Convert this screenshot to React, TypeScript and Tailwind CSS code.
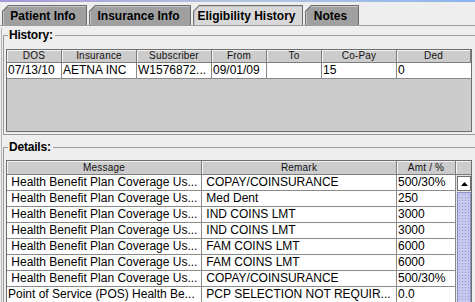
import React from "react";

const histHeaders = ["DOS", "Insurance", "Subscriber", "From", "To", "Co-Pay", "Ded"];
const histRow = ["07/13/10", "AETNA INC", "W1576872...", "09/01/09", "", "15", "0"];
const histWidths = ["w-[55px]", "w-[75px]", "w-[75px]", "w-[55px]", "w-[55px]", "w-[75px]", "w-[74px]"];

const detHeaders = ["Message", "Remark", "Amt / %"];
const detWidths = ["w-[195px]", "w-[195px]", "w-[59px]"];
const detRows: string[][] = [
  [" Health Benefit Plan Coverage Us...", " COPAY/COINSURANCE", "500/30%"],
  [" Health Benefit Plan Coverage Us...", " Med Dent", "250"],
  [" Health Benefit Plan Coverage Us...", " IND COINS LMT", "3000"],
  [" Health Benefit Plan Coverage Us...", " IND COINS LMT", "3000"],
  [" Health Benefit Plan Coverage Us...", " FAM COINS LMT", "6000"],
  [" Health Benefit Plan Coverage Us...", " FAM COINS LMT", "6000"],
  [" Health Benefit Plan Coverage Us...", " COPAY/COINSURANCE", "500/30%"],
  ["Point of Service (POS) Health Be...", " PCP SELECTION NOT REQUIR...", "0.0"],
];

function Tab({ label, width, selected }: { label: string; width: string; selected?: boolean }) {
  return (
    <div
      className={`${width} h-[20px] bg-[#6e6e6e] [clip-path:polygon(6px_0,100%_0,100%_100%,0_100%,0_6px)]`}
    >
      <div
        className={`ml-px mt-px mr-px h-[19px] flex items-center justify-center pr-[3px] text-[12px] font-bold leading-[14px] ${
          selected ? "bg-[#d8d8d8]" : "bg-[#a0a0a0]"
        } [clip-path:polygon(5.5px_0,100%_0,100%_100%,0_100%,0_5.5px)] shadow-[inset_1px_1px_0_#c4c4c4]`}
      >
        {label}
      </div>
    </div>
  );
}

function HeaderCell({ label, width, h }: { label: string; width: string; h: string }) {
  return (
    <div
      className={`${width} ${h} shrink-0 bg-[#cccccc] border-r border-b border-[#7d7d7d] shadow-[inset_1px_1px_0_#f4f4f4] flex items-center justify-center text-[10px] leading-[12px] tracking-[0.2px] text-[#111]`}
    >
      {label}
    </div>
  );
}

function DataCell({ text, width, last }: { text: string; width: string; last?: boolean }) {
  return (
    <div
      className={`${width} h-[16px] shrink-0 bg-white border-b ${last ? "" : "border-r"} border-[#8a8a8a] pl-px flex items-center overflow-hidden whitespace-pre text-[12px] leading-[15px]`}
    >
      {text}
    </div>
  );
}

export default function App() {
  return (
    <div className="w-[475px] h-[302px] overflow-hidden bg-[#eeeeee] font-['Liberation_Sans',Arial,sans-serif] text-black">
      <div className="h-[2px] bg-gradient-to-r from-[#a597d6] via-[#b4c7e0] to-[#8db3ee]" />
      <div className="h-[24px] flex items-end gap-[2px] pl-[2px] border-b border-[#9c9c9c]">
        <Tab label="Patient Info" width="w-[85px]" />
        <Tab label="Insurance Info" width="w-[102px]" />
        <Tab label="Eligibility History" width="w-[110px]" selected />
        <Tab label="Notes" width="w-[54px]" />
      </div>
      <div className="ml-px border-l border-[#b4b4b4] h-[276px] pl-px">
        <fieldset className="w-[480px] min-w-0 mt-[2px] border border-[#9a9a9a] pl-[2px] pb-[2px]">
          <legend className="ml-[2px] pl-px pr-[2px] text-[12px] font-bold leading-[14px] tracking-[-0.2px]">
            History:
          </legend>
          <div className="mt-[7px] w-[466px] border border-[#6e6e6e] bg-[#cccccc]">
            <div className="flex">
              {histHeaders.map((h, i) => (
                <HeaderCell key={h} label={h} width={histWidths[i]} h="h-[13px]" />
              ))}
            </div>
            <div className="flex">
              {histRow.map((t, i) => (
                <DataCell key={i} text={t} width={histWidths[i]} last={i === histRow.length - 1} />
              ))}
            </div>
            <div className="h-[52px]" />
          </div>
        </fieldset>
        <fieldset className="w-[480px] min-w-0 mt-[5px] border border-[#9a9a9a] pl-[2px] h-[200px]">
          <legend className="ml-[2px] pl-px pr-[2px] text-[12px] font-bold leading-[14px] tracking-[-0.2px]">
            Details:
          </legend>
          <div className="mt-[6px] w-[466px] border border-[#6e6e6e] bg-[#cccccc] flex">
            <div className="flex flex-col">
              <div className="flex">
                {detHeaders.map((h, i) => (
                  <HeaderCell key={h} label={h} width={detWidths[i]} h="h-[14px]" />
                ))}
              </div>
              {detRows.map((r, ri) => (
                <div key={ri} className="flex">
                  {r.map((t, i) => (
                    <DataCell key={i} text={t} width={detWidths[i]} />
                  ))}
                </div>
              ))}
            </div>
            <div className="w-[15px] flex flex-col bg-[#e4e4e4]">
              <div className="h-[14px] bg-[#cccccc] border-b border-[#7d7d7d] shadow-[inset_1px_1px_0_#f4f4f4]" />
              <div className="mt-px ml-[1px] w-[14px] h-[15px] bg-white border border-[#6e6e6e] flex items-center justify-center">
                <svg width="7" height="4" viewBox="0 0 7 4">
                  <polygon points="3.5,0 7,4 0,4" fill="#000" />
                </svg>
              </div>
              <div className="mt-px ml-[1px] w-[14px] h-[120px] border border-[#8d8dc4] bg-[#c8c8ee] bg-[radial-gradient(#9a9ad0_0.8px,transparent_0.9px)] bg-[length:3px_3px]" />
            </div>
          </div>
        </fieldset>
      </div>
    </div>
  );
}
